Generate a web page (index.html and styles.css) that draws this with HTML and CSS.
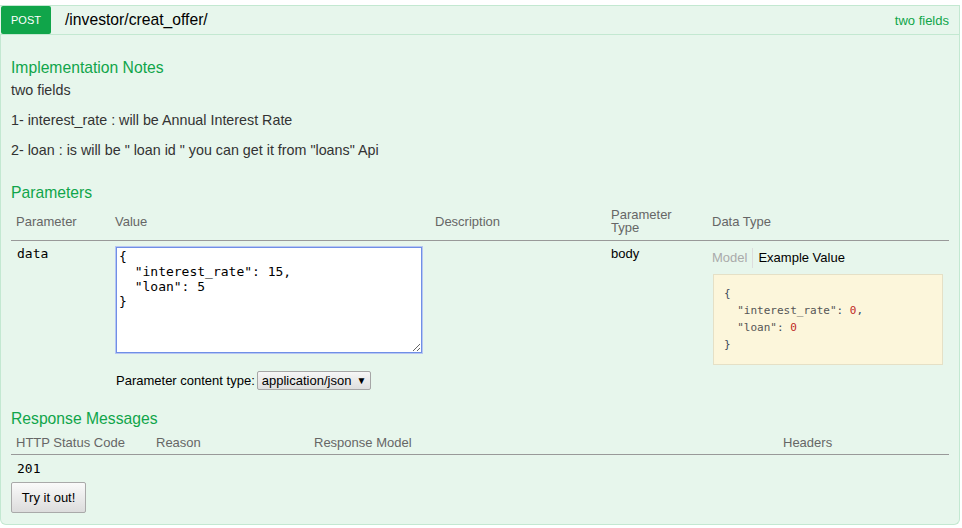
FILE: index.html
```html
<!DOCTYPE html>
<html>
<head>
<meta charset="utf-8">
<link rel="stylesheet" href="styles.css">
</head>
<body>
<div class="op">
  <div class="heading">
    <span class="method">POST</span>
    <span class="path">/investor/creat_offer/</span>
    <span class="summary">two fields</span>
  </div>
  <div class="content">
    <h4 class="sect first">Implementation Notes</h4>
    <div class="notes">
      <p>two fields</p>
      <p>1- interest_rate : will be Annual Interest Rate</p>
      <p>2- loan : is will be " loan id " you can get it from "loans" Api</p>
    </div>
    <h4 class="sect params-title">Parameters</h4>
    <table class="tbl params">
      <colgroup><col class="c1"><col class="c2"><col class="c3"><col class="c4"><col class="c5"></colgroup>
      <thead>
        <tr><th>Parameter</th><th>Value</th><th>Description</th><th class="two">Parameter<br>Type</th><th>Data Type</th></tr>
      </thead>
      <tbody>
        <tr>
          <td class="code">data</td>
          <td>
            <textarea class="body-input" spellcheck="false">{
  "interest_rate": 15,
  "loan": 5
}</textarea>
            <div class="ctype">Parameter content type: <span class="select">application/json<span class="caret">▼</span></span></div>
          </td>
          <td></td>
          <td class="ptype">body</td>
          <td>
            <div class="tabs"><span class="tab off">Model</span><span class="tab on">Example Value</span></div>
            <pre class="sample">{
  <span class="k">"interest_rate"</span>: <span class="n">0</span>,
  <span class="k">"loan"</span>: <span class="n">0</span>
}</pre>
          </td>
        </tr>
      </tbody>
    </table>
    <h4 class="sect resp-title">Response Messages</h4>
    <table class="tbl resp">
      <colgroup><col class="r1"><col class="r2"><col class="r3"><col class="r4"></colgroup>
      <thead>
        <tr><th>HTTP Status Code</th><th>Reason</th><th>Response Model</th><th>Headers</th></tr>
      </thead>
      <tbody>
        <tr><td class="code">201</td><td></td><td></td><td></td></tr>
      </tbody>
    </table>
    <button class="try">Try it out!</button>
  </div>
</div>
</body>
</html>
```

FILE: styles.css
```css
html, body {
  margin: 0;
  padding: 0;
  background: #fff;
}
body {
  font-family: "Liberation Sans", Arial, sans-serif;
  font-size: 13px;
  color: #222;
}
.op {
  margin: 5px 2px 0 0;
  width: 960px;
}
.heading {
  display: flex;
  align-items: center;
  height: 28px;
  background: #e7f6ec;
  border: 1px solid #c3e8d1;
  border-left: none;
  padding-left: 1px;
}
.method {
  width: 50px;
  height: 28px;
  line-height: 28px;
  text-align: center;
  background: #10a54a;
  color: #fff;
  font-size: 11px;
  border-radius: 2px;
}
.path {
  margin-left: 14px;
  font-size: 15.7px;
  color: #000;
}
.summary {
  margin-left: auto;
  margin-right: 10px;
  color: #10a54a;
  font-size: 13px;
}
.content {
  background: #e7f6ec;
  border: 1px solid #c3e8d1;
  border-top: none;
  border-radius: 0 0 6px 6px;
  padding: 0 9px 11px 10px;
}
.sect {
  margin: 0;
  font-weight: normal;
  font-size: 15.7px;
  color: #10a54a;
  line-height: 20px;
}
.sect.first { padding-top: 23px; }
.notes p {
  margin: 0 0 10px;
  font-size: 14.3px;
  line-height: 20px;
  color: #333;
}
.notes p:first-child { margin-top: 2px; }
.params-title { margin-top: 23px; }
.tbl {
  width: 938px;
  border-collapse: collapse;
  table-layout: fixed;
}
.tbl th {
  text-align: left;
  font-weight: normal;
  color: #666;
  font-size: 13px;
  padding: 5px 5px 6px;
  border-bottom: 1px solid #999;
  vertical-align: middle;
}
.tbl th.two { line-height: 13px; }
.tbl td {
  vertical-align: top;
  padding: 6px 5px 0;
}
.c1 { width: 99px; }
.c2 { width: 320px; }
.c3 { width: 176px; }
.c4 { width: 101px; }
.c5 { width: auto; }
.code {
  font-family: "DejaVu Sans Mono", monospace;
  font-size: 13px;
  color: #000;
  padding-left: 6px !important;
}
.params .code { padding-top: 5px; }
.body-input {
  display: block;
  box-sizing: border-box;
  width: 306px;
  height: 106px;
  margin: 0 0 0 1px;
  padding: 1px 2px;
  border: 1px solid #6f8fe6;
  box-shadow: 0 0 0 1px #b7c6f2;
  outline: none;
  font-family: "DejaVu Sans Mono", monospace;
  font-size: 13px;
  line-height: 15px;
  color: #000;
  background: #fff;
  resize: vertical;
}
.ctype {
  margin: 18px 0 0 1px;
  color: #000;
  font-size: 13px;
  display: flex;
  align-items: center;
  gap: 2px;
}
.select {
  display: inline-flex;
  align-items: center;
  height: 17px;
  padding: 0 4px 0 4px;
  border: 1px solid #a6a6a6;
  border-radius: 2px;
  background: linear-gradient(#f6f6f6, #dedede);
  color: #000;
  font-size: 13px;
}
.caret {
  font-size: 10px;
  margin-left: 5px;
}
.ptype {
  color: #000;
  padding-top: 5px !important;
}
.tabs {
  display: flex;
  align-items: center;
  height: 22px;
}
.tab {
  font-size: 13px;
  line-height: 20px;
}
.tab.off {
  color: #aaa;
  padding-right: 5px;
  border-right: 1px solid #ddd;
}
.tab.on {
  color: #000;
  padding-left: 5px;
}
.sample {
  box-sizing: border-box;
  width: 230px;
  margin: 5px 0 0 1px;
  padding: 10px 10px 11px;
  background: #fcf6db;
  border: 1px solid #e5e0c6;
  font-family: "DejaVu Sans Mono", monospace;
  font-size: 11px;
  line-height: 17px;
  color: #3d4a5c;
}
.sample .k { color: #555; }
.sample .n { color: #c0281f; }
.resp-title { margin-top: 19px; }
.r1 { width: 140px; }
.r2 { width: 158px; }
.r3 { width: 469px; }
.r4 { width: auto; }
.resp th { padding-top: 6px; padding-bottom: 4px; }
.resp td { padding-top: 6px; height: 16px; }
.try {
  display: block;
  box-sizing: border-box;
  margin: 5px 0 0 0;
  width: 75px;
  height: 31px;
  padding: 0;
  text-align: center;
  font-family: "Liberation Sans", Arial, sans-serif;
  font-size: 13px;
  color: #000;
  background: linear-gradient(#fafafa, #dcdcdc);
  border: 1px solid #a9a9a9;
  border-radius: 2px;
}
```
